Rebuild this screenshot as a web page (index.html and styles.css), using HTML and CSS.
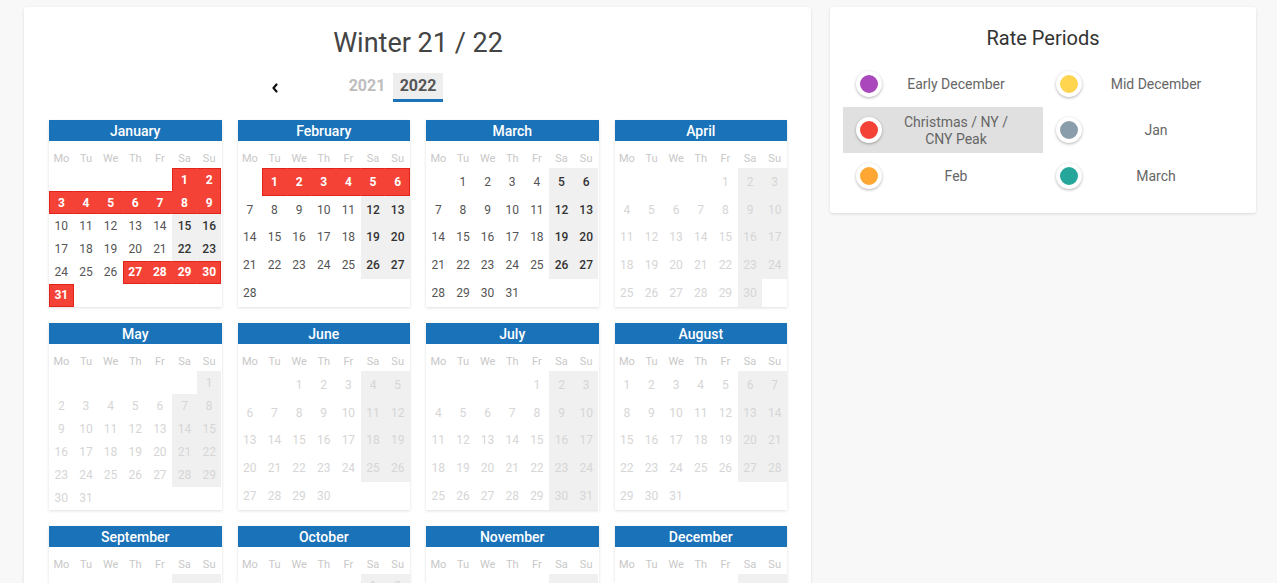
FILE: index.html
```html
<!DOCTYPE html>
<html lang="en">
<head>
    <meta charset="UTF-8">
    <meta name="viewport" content="width=device-width, initial-scale=1.0">
    <title>Winter 21 / 22 - Rate Calendar</title>
    <link rel="stylesheet" href="styles.css">
</head>
<body>
    <div class="page">
        <section class="card season">
            <h1 class="season-title">Winter 21 / 22</h1>

            <div class="year-nav">
                <button class="nav-arrow" aria-label="Previous">
                    <svg viewBox="0 0 8 10" width="8" height="10" fill="none" stroke="#111" stroke-width="2.2" stroke-linecap="round" stroke-linejoin="round">
                        <path d="M5.5 1.5 L2.5 5 L5.5 8.5"></path>
                    </svg>
                </button>
                <div class="year-tabs">
                    <div class="year-tab">2021</div>
                    <div class="year-tab active">2022</div>
                </div>
            </div>

            <div class="months" id="months">
                <!-- months are built below -->
            </div>
        </section>

        <aside class="card legend">
            <h2 class="legend-title">Rate Periods</h2>
            <ul class="legend-list">
                <li class="legend-item"><span class="dot purple"></span><span class="legend-label">Early December</span></li>
                <li class="legend-item"><span class="dot yellow"></span><span class="legend-label">Mid December</span></li>
                <li class="legend-item selected"><span class="dot red"></span><span class="legend-label">Christmas / NY / CNY Peak</span></li>
                <li class="legend-item"><span class="dot grey"></span><span class="legend-label">Jan</span></li>
                <li class="legend-item"><span class="dot orange"></span><span class="legend-label">Feb</span></li>
                <li class="legend-item"><span class="dot teal"></span><span class="legend-label">March</span></li>
            </ul>
        </aside>
    </div>

    <script>
        // Build the twelve month grids for 2022
        const year = 2022;
        const monthNames = ['January', 'February', 'March', 'April', 'May', 'June',
            'July', 'August', 'September', 'October', 'November', 'December'];
        const dayNames = ['Mo', 'Tu', 'We', 'Th', 'Fr', 'Sa', 'Su'];

        // Season covers Jan - Mar, peak days shown in red
        const activeUntil = 2;
        const peak = {
            0: [1, 2, 3, 4, 5, 6, 7, 8, 9, 27, 28, 29, 30, 31],
            1: [1, 2, 3, 4, 5, 6]
        };

        const container = document.getElementById('months');

        monthNames.forEach((name, m) => {
            const offset = (new Date(year, m, 1).getDay() + 6) % 7;
            const days = new Date(year, m + 1, 0).getDate();
            const red = peak[m] || [];
            const isRed = d => red.includes(d);

            const card = document.createElement('div');
            card.className = 'month' + (m > activeUntil ? ' inactive' : '');

            const head = document.createElement('div');
            head.className = 'month-head';
            head.textContent = name;
            card.appendChild(head);

            const dow = document.createElement('div');
            dow.className = 'dow';
            dayNames.forEach(n => {
                const s = document.createElement('span');
                s.textContent = n;
                dow.appendChild(s);
            });
            card.appendChild(dow);

            const grid = document.createElement('div');
            grid.className = 'days';
            for (let i = 0; i < offset; i++) {
                grid.appendChild(document.createElement('span'));
            }
            for (let d = 1; d <= days; d++) {
                const col = (offset + d - 1) % 7;
                const cell = document.createElement('span');
                cell.textContent = d;
                cell.className = 'day';
                if (col >= 5) cell.classList.add('weekend');
                if (isRed(d)) {
                    cell.classList.add('peak');
                    if (col === 0 || !isRed(d - 1)) cell.classList.add('edge-l');
                    if (col === 6 || !isRed(d + 1) || d === days) cell.classList.add('edge-r');
                    if (!isRed(d - 7) || d - 7 < 1) cell.classList.add('edge-t');
                    if (!isRed(d + 7) || d + 7 > days) cell.classList.add('edge-b');
                }
                grid.appendChild(cell);
            }
            card.appendChild(grid);
            container.appendChild(card);
        });
    </script>
</body>
</html>
```

FILE: styles.css
```css
html, body {
    overflow: hidden;
}

body {
    font-family: Roboto, 'Noto Sans', Arial, sans-serif;
    margin: 0;
    padding: 0;
    background-color: #f8f8f8;
    color: #444;
}

.page {
    display: flex;
    align-items: flex-start;
    gap: 19px;
    padding: 7px 21px 0 24px;
}

.card {
    background-color: white;
    border-radius: 3px;
    box-shadow: 0 1px 3px rgba(0, 0, 0, 0.12);
}

/* Season calendar */

.season {
    flex: 0 0 787px;
    box-sizing: border-box;
    padding: 20px 24px 24px 25px;
}

.season-title {
    margin: 0;
    font-size: 27px;
    line-height: 33px;
    font-weight: 400;
    text-align: center;
    color: #444;
}

.year-nav {
    display: flex;
    align-items: center;
    margin: 13px 0 18px 201px;
}

.nav-arrow {
    width: 50px;
    height: 29px;
    padding: 0;
    border: none;
    background: transparent;
    display: flex;
    align-items: center;
    justify-content: center;
    cursor: pointer;
}

.year-tabs {
    display: flex;
    gap: 1px;
    margin-left: 42px;
}

.year-tab {
    width: 50px;
    height: 26px;
    line-height: 26px;
    text-align: center;
    font-size: 16px;
    font-weight: 700;
    color: #bdbdbd;
    border-bottom: 3px solid transparent;
}

.year-tab.active {
    background-color: #eeeeee;
    color: #555;
    border-bottom-color: #1a72b9;
}

.months {
    display: grid;
    grid-template-columns: repeat(4, 1fr);
    gap: 16px;
}

.month {
    background-color: white;
    box-shadow: 0 1px 3px rgba(0, 0, 0, 0.13);
}

.month-head {
    height: 21px;
    line-height: 22px;
    background-color: #1a72b9;
    color: white;
    text-align: center;
    font-size: 14px;
    font-weight: 500;
}

.dow {
    display: grid;
    grid-template-columns: repeat(7, 1fr);
    padding: 10px 0 1px;
    line-height: 16px;
    font-size: 11px;
    color: #c8c8c8;
    text-align: center;
}

.days {
    display: grid;
    grid-template-columns: repeat(7, 1fr);
    grid-auto-rows: 1fr;
    height: 139px;
    font-size: 12px;
    text-align: center;
}

.day {
    display: flex;
    align-items: center;
    justify-content: center;
    box-sizing: border-box;
    color: #555;
}

.day.weekend {
    background-color: #f0f0f0;
    color: #333;
    font-weight: 500;
}

.day.peak {
    background-color: #f44336;
    color: white;
    font-weight: 700;
    border: 1px solid #f44336;
}

.day.peak.edge-l { border-left-color: #e2231a; }
.day.peak.edge-r { border-right-color: #e2231a; }
.day.peak.edge-t { border-top-color: #e2231a; }
.day.peak.edge-b { border-bottom-color: #e2231a; }

.month.inactive .day {
    color: #d6d6d6;
    font-weight: 400;
}

/* Legend */

.legend {
    flex: 1;
    padding: 19px 13px 14px;
}

.legend-title {
    margin: 0 0 11px;
    font-size: 20px;
    line-height: 24px;
    font-weight: 400;
    text-align: center;
    color: #333;
}

.legend-list {
    list-style: none;
    margin: 0;
    padding: 0;
    display: grid;
    grid-template-columns: repeat(2, 1fr);
    grid-auto-rows: 46px;
}

.legend-item {
    display: flex;
    align-items: center;
}

.legend-item.selected {
    background-color: #e0e0e0;
}

.dot {
    flex: 0 0 auto;
    width: 18px;
    height: 18px;
    margin-left: 13px;
    border: 4px solid white;
    border-radius: 50%;
    box-shadow: 0 1px 3px rgba(0, 0, 0, 0.3);
}

.dot.purple { background-color: #ab47bc; }
.dot.yellow { background-color: #ffd54f; }
.dot.red { background-color: #f44336; }
.dot.grey { background-color: #8a9daa; }
.dot.orange { background-color: #ffa733; }
.dot.teal { background-color: #26a69a; }

.legend-label {
    flex: 1;
    padding: 1px 25px 0 12px;
    text-align: center;
    font-size: 14px;
    line-height: 17px;
    color: #666;
}
```
